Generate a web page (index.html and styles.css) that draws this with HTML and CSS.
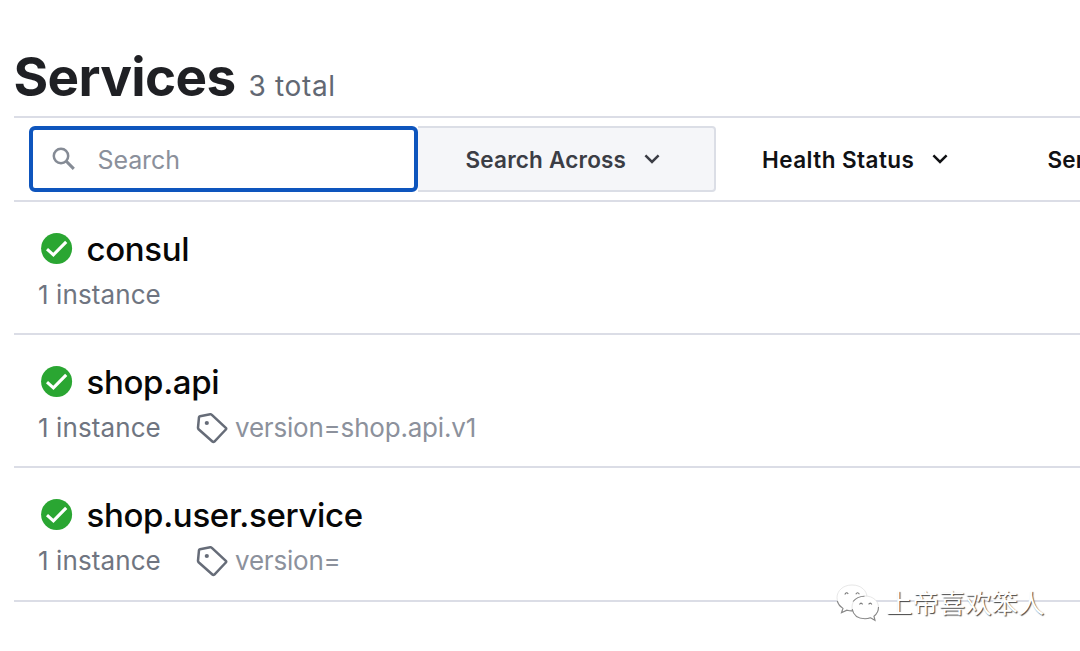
FILE: index.html
```html
<!DOCTYPE html>
<html lang="en">
<head>
<meta charset="utf-8">
<title>Services</title>
<link rel="stylesheet" href="styles.css">
</head>
<body>
<svg class="defs" width="0" height="0">
  <symbol id="check" viewBox="0 0 32 32"><circle cx="15.6" cy="15.5" r="15.5" fill="#2aa632"/><path d="M6 16.2 L12.4 21.8 L25.2 8.8" fill="none" stroke="#fff" stroke-width="3.1"/></symbol>
  <symbol id="tag" viewBox="0 0 32 32"><path d="M4 4.2 L14.2 2.2 Q15 2.1 15.6 2.7 L29.8 15.8 Q30.6 16.7 29.8 17.5 L18.4 29.5 Q17.4 30.4 16.4 29.5 L2.6 17.3 Q1.9 16.6 2 15.6 L3 5.2 Q3.1 4.4 4 4.2Z" fill="none" stroke="#666c78" stroke-width="2.5"/><circle cx="10.8" cy="11" r="2.1" fill="#666c78"/></symbol>
  <symbol id="chevron" viewBox="0 0 16 10"><path d="M1.4 1.4 L8 8 L14.6 1.4" fill="none" stroke="currentColor" stroke-width="2.5"/></symbol>
</svg>
<main class="page">
  <header class="head"><h1 class="title">Services</h1><span class="total">3 total</span></header>
  <div class="toolbar">
    <div class="search">
      <svg class="glass" viewBox="0 0 24 24"><circle cx="9" cy="9" r="7.2" fill="none" stroke="#858b95" stroke-width="2.5"/><path d="M14 14 L21.8 21.8" stroke="#858b95" stroke-width="3.1"/></svg>
      <span class="placeholder">Search</span>
    </div>
    <div class="across"><span class="label">Search Across</span><svg class="chev"><use href="#chevron"/></svg></div>
    <div class="filter"><span class="label health">Health Status</span><svg class="chev"><use href="#chevron"/></svg></div>
    <div class="filter type"><span class="label">Service Type</span></div>
  </div>
  <ul class="list">
    <li class="row">
      <div class="name"><svg class="check"><use href="#check"/></svg><span>consul</span></div>
      <div class="meta"><span class="count">1 instance</span></div>
    </li>
    <li class="row">
      <div class="name"><svg class="check"><use href="#check"/></svg><span>shop.api</span></div>
      <div class="meta"><span class="count">1 instance</span><svg class="tag"><use href="#tag"/></svg><span class="version">version=shop.api.v1</span></div>
    </li>
    <li class="row">
      <div class="name"><svg class="check"><use href="#check"/></svg><span>shop.user.service</span></div>
      <div class="meta"><span class="count">1 instance</span><svg class="tag"><use href="#tag"/></svg><span class="version">version=</span></div>
    </li>
  </ul>
</main>
<div class="watermark">
  <svg class="wechat" viewBox="0 0 44 38">
    <g fill="#fff" stroke="#ddd" stroke-width=".7">
      <path d="M16 1 C7 1 1 6.8 1 13.7 C1 18 3.2 21.5 6.7 24 L5.2 28.6 L11 25.8 Q14 26.8 17 26.6 C26 26.4 31 20.5 31 13.5 C31 6.5 25 1 16 1Z"/>
      <path d="M29 12 C21 12 16 17 16 23.2 C16 29.7 21.5 34.5 29 34.5 Q32 34.5 34.5 33.5 L39 36 L37.8 32 C41 29.8 42.5 26.8 42.5 23.2 C42.5 17 37 12 29 12Z"/>
    </g>
    <path d="M1.3 17 Q2.5 21.5 7 24.4 L5.5 28.8 L11 26.2 Q14 27 16.5 26.8 M17 17.5 Q21 12.3 28.5 12.2 M16.2 25 Q18 34.8 29 34.8 Q32 34.8 34.5 33.8 L39 36.3 L38 32.2 Q42.5 28.8 42.5 23" fill="none" stroke="#888" stroke-width="1.1"/>
    <path d="M8.8 10.5 Q10.5 7.3 12.2 10 M19.8 10.2 Q21.5 7.3 23.4 10.2 M23.5 20.4 Q25 17.8 26.6 20.4 M32.6 20.4 Q34.3 17.8 35.8 20.4" fill="none" stroke="#777" stroke-width="1.1"/>
  </svg>
  <span class="author">上帝喜欢笨人</span>
</div>
</body>
</html>
```
FILE: styles.css
```css
* { box-sizing: border-box; }
body { margin: 0; width: 1080px; height: 651px; overflow: hidden; background: #fff; font-family: Inter, "Liberation Sans", sans-serif; white-space: nowrap; position: relative; }
.defs { position: absolute; }
.page { padding-left: 14px; }
.head { height: 116px; padding-top: 45px; display: flex; align-items: baseline; gap: 13px; }
.title { margin: 0 0 0 -0.5px; font-size: 53px; line-height: 64px; font-weight: 700; letter-spacing: -0.65px; color: #1f2024; }
.total { font-size: 28px; letter-spacing: 0.65px; color: #626873; }
.toolbar { height: 86px; border-top: 2px solid #dbdde6; border-bottom: 2px solid #dbdde6; padding: 8px 0 0 15px; display: flex; overflow: hidden; }
.search { width: 389px; height: 66px; border: 4px solid #0e55bd; border-radius: 6px; padding-left: 18.5px; display: flex; align-items: center; gap: 22px; flex: none; }
.glass { width: 24px; height: 24px; }
.placeholder { padding-top: 2px; font-size: 25px; letter-spacing: -0.1px; color: #8b909b; }
.across { width: 298px; height: 66px; background: #f5f6f9; border: 2px solid #dbdee6; border-left: 0; border-radius: 0 4px 4px 0; padding-left: 47.5px; display: flex; align-items: center; gap: 18px; color: #3b3d45; flex: none; }
.filter { height: 66px; padding-left: 46px; display: flex; align-items: center; gap: 18px; color: #101114; flex: none; }
.type { padding-left: 99px; }
.label { font-size: 22.5px; font-weight: 600; letter-spacing: 0.2px; }
.health { letter-spacing: 0.45px; }
.chev { width: 16px; height: 10px; }
.list { list-style: none; margin: 0; padding: 0; }
.row { height: 133.2px; border-bottom: 2px solid #dbdde6; padding: 26px 0 0 24px; }
.name { height: 42px; display: flex; align-items: center; gap: 13.5px; padding-left: 3px; font-size: 33px; font-weight: 500; letter-spacing: -0.32px; color: #070707; }
.check { width: 32px; height: 32px; }
.meta { height: 48px; display: flex; align-items: center; font-size: 26px; color: #6f7581; }
.count { width: 158px; letter-spacing: 0.1px; }
.tag { width: 32px; height: 32px; margin: 1px 7px 0 0; }
.version { color: #8c919c; letter-spacing: -0.2px; }
.watermark { position: absolute; left: 836px; top: 584px; display: flex; align-items: center; gap: 6px; }
.wechat { width: 44px; height: 38px; }
.author { font-family: "Noto Sans CJK SC", sans-serif; font-size: 26.4px; line-height: 38px; margin-top: -2px; color: #fff; text-shadow: 1px 1px 1px #444; }
```
